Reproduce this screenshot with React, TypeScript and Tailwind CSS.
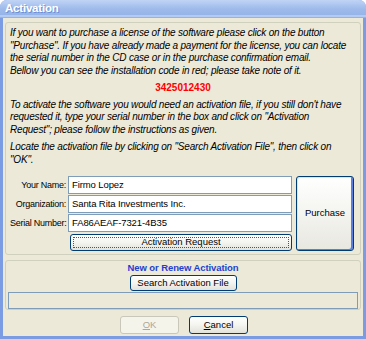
import React from 'react';

const font = "font-['Liberation_Sans',Arial,sans-serif]";

// XP-style push button
const XpButton: React.FC<{
  children: React.ReactNode;
  className?: string;
  disabled?: boolean;
  focused?: boolean;
  isDefault?: boolean;
}> = ({ children, className = '', disabled, focused, isDefault }) => {
  if (disabled) {
    return (
      <div
        className={`flex items-center justify-center rounded-[3px] border border-[#c9c7ba] bg-[#f5f4ea] text-[9.5px] text-[#aca899] ${className}`}
      >
        {children}
      </div>
    );
  }
  return (
    <div
      className={`relative flex items-center justify-center whitespace-nowrap rounded-[3px] border border-[#003c74] bg-gradient-to-b from-[#ffffff] via-[#f4f4f0] to-[#e3e2da] text-[9.5px] text-black ${
        isDefault ? 'shadow-[inset_-2px_-1px_0_#5b7fe0,inset_1px_1px_0_#cee7ff]' : ''
      } ${className}`}
    >
      {focused && (
        <div className="pointer-events-none absolute inset-[2px] border border-dotted border-[#555]" />
      )}
      {children}
    </div>
  );
};

const Field: React.FC<{ label: string; value: string }> = ({ label, value }) => (
  <div className="flex h-[18px] items-center">
    <div className="w-[58px] whitespace-nowrap pr-[2px] text-right text-[9px] tracking-[-0.25px] text-black">
      {label}
    </div>
    <div className="flex h-[18px] w-[224px] items-center whitespace-nowrap border border-[#7f9db9] bg-white pl-[3px] text-[9.5px] tracking-[-0.1px] text-black">
      {value}
    </div>
  </div>
);

export default function App() {
  return (
    <div className={`${font} h-[339px] w-[366px] overflow-hidden bg-white`}>
      <div className="flex h-[339px] w-[366px] flex-col rounded-t-[7px] bg-[#7b9ce3]">
        {/* Title bar */}
        <div className="relative flex h-[18px] items-center rounded-t-[7px] bg-gradient-to-b from-[#c0d4f5] via-[#9ebaeb] to-[#93b1e8] pl-[5px]">
          <span className="text-[11.5px] font-bold leading-none tracking-[-0.2px] text-white [text-shadow:1px_1px_0_#6e8fd4]">
            Activation
          </span>
          <div className="absolute bottom-[1px] left-0 right-0 h-[2px] bg-[#b3caf3]" />
        </div>

        {/* Client area */}
        <div className="mx-[3px] mb-[3px] flex flex-1 flex-col bg-[#ece9d8] px-[2px] pt-[4px]">
          {/* Main group */}
          <div className="flex h-[233px] flex-col rounded-[3px] border border-[#d0d0bf] px-[4px] pt-[4px] text-[10px] italic leading-[12.5px] tracking-[-0.2px] text-black">
            <p className="whitespace-nowrap">
              If you want to purchase a license of the software please click on the button
              <br />
              "Purchase". If you have already made a payment for the license, you can locate
              <br />
              the serial number in the CD case or in the purchase confirmation email.
              <br />
              Bellow you can see the installation code in red; please take note of it.
            </p>
            <p className="mt-[5px] text-center font-bold not-italic tracking-normal text-[#ff0000]">3425012430</p>
            <p className="mt-[4px] whitespace-nowrap">
              To activate the software you would need an activation file, if you still don't have
              <br />
              requested it, type your serial number in the box and click on "Activation
              <br />
              Request"; please follow the instructions as given.
            </p>
            <p className="mt-[5px] whitespace-nowrap">
              Locate the activation file by clicking on "Search Activation File", then click on
              <br />
              "OK".
            </p>

            <div className="mt-[10px] flex not-italic tracking-normal">
              <div className="flex flex-col gap-[1px]">
                <Field label="Your Name:" value="Firmo Lopez" />
                <Field label="Organization:" value="Santa Rita Investments Inc." />
                <Field label="Serial Number:" value="FA86AEAF-7321-4B35" />
                <XpButton focused className="ml-[60px] mt-[1px] h-[17px] w-[222px]">
                  Activation Request
                </XpButton>
              </div>
              <XpButton isDefault className="ml-[4px] h-[75px] w-[58px] from-[#f6f6f3] via-[#f0f0ec] to-[#e8e7e0]">
                Purchase
              </XpButton>
            </div>
          </div>

          {/* Activation group */}
          <div className="mt-[5px] flex h-[50px] flex-col items-center rounded-[3px] border border-[#d0d0bf] px-[2px] pt-[1px]">
            <div className="whitespace-nowrap text-[9.5px] font-bold leading-[12px] tracking-[-0.1px] text-[#1f3fd0]">
              New or Renew Activation
            </div>
            <XpButton className="mt-[1px] h-[17px] w-[107px]">Search Activation File</XpButton>
            <div className="mt-[1px] h-[19px] w-full border border-[#7f9db9] bg-[#ece9d8]" />
          </div>

          {/* Dialog buttons */}
          <div className="mt-[6px] flex justify-center gap-[10px] pl-[2px]">
            <XpButton disabled className="h-[18px] w-[59px]">
              <span className="underline">O</span>K
            </XpButton>
            <XpButton className="h-[18px] w-[59px]">
              <span className="underline">C</span>ancel
            </XpButton>
          </div>
        </div>
      </div>
    </div>
  );
}
